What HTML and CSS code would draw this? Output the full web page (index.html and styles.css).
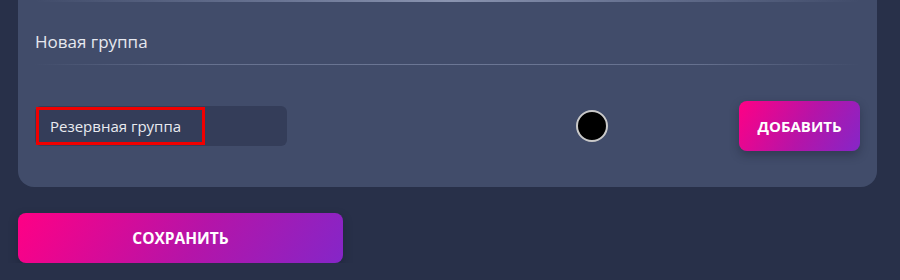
FILE: index.html
```html
<!DOCTYPE html>
<html>
<head>
  <title>Группы</title>
  <meta charset="utf-8">
  <link rel="stylesheet" href="styles.css">
</head>
<body>
<div class="page">
  <div class="card">
    <div class="row-line"></div>
    <div class="group-name">Новая группа</div>
    <div class="row-line"></div>
    <div class="add-row">
      <div class="name-input"><span class="name-value">Резервная группа</span></div>
      <div class="color-dot"></div>
      <div></div>
      <button class="btn btn-add">Добавить</button>
    </div>
  </div>
  <button class="btn btn-save">Сохранить</button>
</div>
</body>
</html>
```

FILE: styles.css
```css
body {
  margin: 0;
  padding: 0;
  background: #283049;
  font-family: 'Open Sans', 'Noto Sans', Arial, sans-serif;
  color: #e6e8ef;
  overflow: hidden;
}
.page {
  padding: 0 23px 0 18px;
  margin-top: -19px; /* страница прокручена вниз */
}
.card {
  background: #414c6a;
  border-radius: 16px;
  padding: 19px 17px 36px 17px;
}
/* разделитель между строками */
.row-line {
  height: 1px;
  background: linear-gradient(90deg, rgba(120,132,165,0) 0%, #66718f 20%, #6c7795 50%, #66718f 80%, rgba(120,132,165,0) 100%);
}
.row-line:first-child {
  height: 2px;
  background: linear-gradient(90deg, rgba(120,132,165,0) 0%, #6a7594 30%, #8a94b0 50%, #6a7594 70%, rgba(120,132,165,0) 100%);
}
.group-name {
  font-size: 17px;
  line-height: 23px;
  padding: 28px 0 11px 0;
}
.add-row {
  display: grid;
  grid-template-columns: 541px 32px 1fr auto;
  align-items: center;
  padding-top: 36px;
}
.name-input {
  width: 252px;
  height: 40px;
  background: #343d59;
  border-radius: 6px;
  padding: 1px 0 0 1px;
  box-sizing: border-box;
}
.name-value {
  display: inline-block;
  height: 38px;
  line-height: 32px;
  border: 3px solid #f00000;
  box-sizing: border-box;
  padding: 0 21px 0 11px;
  font-size: 15px;
  color: #e9ebf0;
}
.color-dot {
  width: 32px;
  height: 32px;
  box-sizing: border-box;
  border-radius: 50%;
  background: #000;
  border: 2px solid #c9c9c9;
}
.btn {
  border: none;
  color: #fff;
  font-family: 'Open Sans', 'Noto Sans', Arial, sans-serif;
  font-weight: bold;
  text-transform: uppercase;
  background: linear-gradient(120deg, #ff0085 0%, #b514a8 55%, #8526c8 100%);
  border-radius: 8px;
  box-shadow: 0 4px 10px rgba(20,24,40,0.35);
  cursor: pointer;
}
.btn-add {
  height: 50px;
  width: 121px;
  font-size: 15px;
  padding: 0;
}
.btn-save {
  display: block;
  margin-top: 26px;
  height: 50px;
  width: 325px;
  font-size: 15.5px;
}
```
